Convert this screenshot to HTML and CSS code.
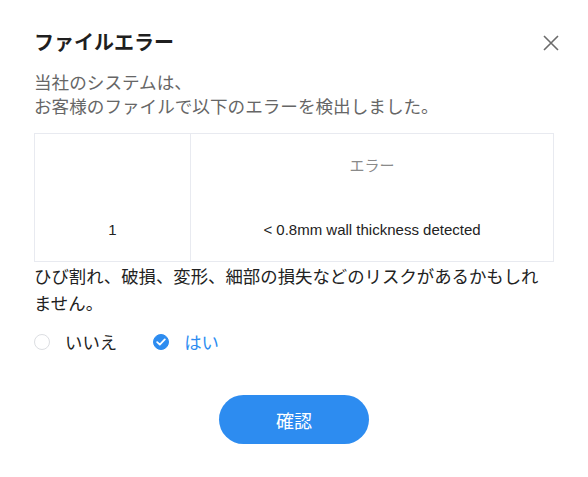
FILE: index.html
```html
<!DOCTYPE html>
<html lang="ja">
<head>
<meta charset="utf-8">
<link rel="stylesheet" href="styles.css">
</head>
<body>
<div class="dialog">
  <div class="header">
    <h1 class="title">ファイルエラー</h1>
    <button class="close" aria-label="close">
      <svg width="16" height="16" viewBox="0 0 16 16"><path d="M1 1L15 15M15 1L1 15" stroke="#6b6b6b" stroke-width="1.6" fill="none"/></svg>
    </button>
  </div>
  <p class="intro">当社のシステムは、<br>お客様のファイルで以下のエラーを検出しました。</p>
  <table class="errors">
    <thead>
      <tr><th class="col-no"></th><th>エラー</th></tr>
    </thead>
    <tbody>
      <tr><td class="col-no">1</td><td>&lt; 0.8mm wall thickness detected</td></tr>
    </tbody>
  </table>
  <p class="warning">ひび割れ、破損、変形、細部の損失などのリスクがあるかもしれません。</p>
  <div class="choices">
    <label class="choice"><span class="radio"></span><span class="label">いいえ</span></label>
    <label class="choice checked"><span class="radio"><svg width="10" height="8" viewBox="0 0 10 8"><path d="M1.2 4.2L3.8 6.6L8.8 1.4" stroke="#fff" stroke-width="1.8" fill="none" stroke-linecap="round" stroke-linejoin="round"/></svg></span><span class="label">はい</span></label>
  </div>
  <div class="footer">
    <button class="confirm">確認</button>
  </div>
</div>
</body>
</html>
```
FILE: styles.css
```css
* { box-sizing: border-box; }
html, body { margin: 0; padding: 0; background: #fff; }
body {
  font-family: "Noto Sans CJK JP", "Noto Sans", "Liberation Sans", sans-serif;
  color: #222;
}
.dialog {
  width: 588px;
  padding: 30px 34px 0 34px;
}
.header {
  display: flex;
  justify-content: space-between;
  align-items: center;
  height: 24px;
}
.title {
  margin: 0;
  font-size: 20px;
  font-weight: 700;
  line-height: 24px;
  color: #1f1f1f;
}
.close {
  border: 0;
  background: none;
  padding: 0;
  margin-right: -5px;
  margin-top: 2px;
  width: 16px;
  height: 16px;
  display: flex;
}
.intro {
  margin: 16px 0 0 0;
  font-size: 17.6px;
  line-height: 24px;
  color: #666;
}
.errors {
  margin-top: 15px;
  width: 520px;
  border-collapse: collapse;
  border: 1px solid #e8eaf0;
  font-family: "Liberation Sans", Arial, sans-serif;
  font-size: 15px;
  table-layout: fixed;
}
.errors th, .errors td {
  height: 64px;
  text-align: center;
  padding: 0;
  border-left: 1px solid #e8eaf0;
}
.errors th {
  font-weight: 400;
  color: #8a8a8a;
  font-family: "Noto Sans CJK JP", sans-serif;
  vertical-align: middle;
  padding-bottom: 2px;
}
.errors td { color: #222; }
.errors .col-no { width: 156px; }
.warning {
  margin: 0;
  font-size: 17.4px;
  line-height: 27px;
  color: #222;
}
.choices {
  display: flex;
  gap: 36px;
  margin-top: 14px;
  height: 24px;
  align-items: center;
}
.choice {
  display: flex;
  align-items: center;
  gap: 15px;
  font-size: 17.4px;
  line-height: 24px;
}
.radio {
  width: 16px;
  height: 16px;
  border-radius: 50%;
  border: 1px solid #dcdee2;
  background: #fff;
  display: flex;
  align-items: center;
  justify-content: center;
}
.checked .radio {
  border-color: #2d8cf0;
  background: #2d8cf0;
}
.checked .label { color: #2d8cf0; }
.footer {
  display: flex;
  justify-content: center;
  margin-top: 41px;
}
.confirm {
  width: 150px;
  height: 49px;
  border: 0;
  border-radius: 25px;
  background: #2d8cf0;
  color: #fff;
  font-family: "Noto Sans CJK JP", sans-serif;
  font-size: 18px;
}
```
